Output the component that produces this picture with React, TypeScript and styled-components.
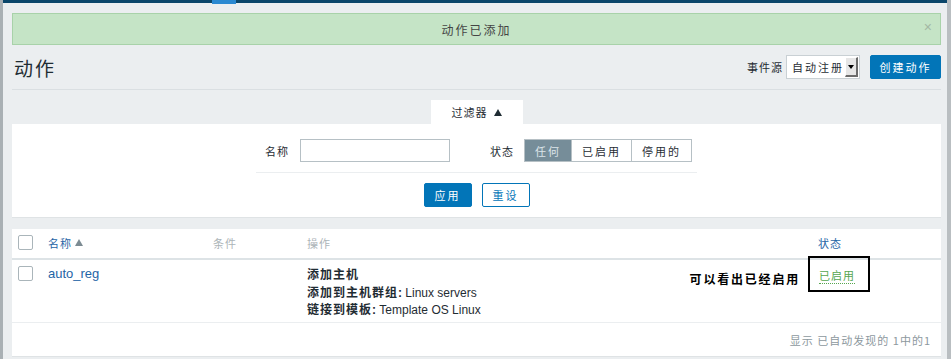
import React from 'react'
import styled, { createGlobalStyle } from 'styled-components'

const GlobalStyle = createGlobalStyle`
  html, body { margin: 0; padding: 0; }
  body {
    background: #ebeef0;
    font-family: "Liberation Sans", "Noto Sans CJK SC", sans-serif;
    font-size: 12px;
    color: #1f2c33;
  }
`

const cjk = `"Noto Sans CJK SC", "Liberation Sans", sans-serif`

const Frame = styled.div`
  width: 951px;
  height: 359px;
  box-sizing: border-box;
  border-left: 3px solid #a9b0b4;
  border-right: 4px solid #b9bec1;
  overflow: hidden;
  position: relative;
`

const TopBar = styled.div`
  height: 3px;
  background: #0a466a;
  display: flex;
  margin-left: -3px;
`

const TopTab = styled.div`
  margin-left: 212px;
  width: 24px;
  height: 4px;
  background: #2a89d1;
`

const Content = styled.div`
  padding: 0 6px 0 9px;
`

const Message = styled.div`
  margin-top: 10px;
  height: 32px;
  box-sizing: border-box;
  border: 1px solid #a8d2a9;
  background: #c5e4c6;
  display: flex;
  align-items: center;
  justify-content: center;
  position: relative;
  font-family: ${cjk};
  font-size: 12px;
  letter-spacing: 2px;
  color: #444;
`

const Close = styled.span`
  position: absolute;
  right: 8px;
  top: 5px;
  font-family: "Liberation Sans", sans-serif;
  font-size: 14px;
  color: #a3b7a4;
  letter-spacing: 0;
`

const Header = styled.div`
  height: 44px;
  border-bottom: 1px solid #dadfe2;
  display: flex;
  align-items: center;
  justify-content: space-between;
`

const Title = styled.h1`
  margin: 0 0 0 2px;
  font-family: ${cjk};
  font-weight: 400;
  font-size: 19px;
  letter-spacing: 2px;
  color: #1f2c33;
`

const Controls = styled.div`
  display: flex;
  align-items: center;
`

const Label = styled.span<{ $gap?: number }>`
  flex-shrink: 0;
  white-space: nowrap;
  margin-left: ${p => p.$gap ?? 0}px;
  font-family: ${cjk};
  font-size: 11px;
  letter-spacing: 1px;
  color: #1f2c33;
`

const Select = styled.div`
  margin-left: 3px;
  width: 74px;
  height: 24px;
  box-sizing: border-box;
  background: #fff;
  border: 1px solid #c9d0d4;
  display: flex;
  align-items: center;
  justify-content: space-between;
  padding-left: 5px;
  font-family: ${cjk};
  font-size: 11px;
  letter-spacing: 2px;
`

const SelectArrow = styled.div`
  width: 13px;
  height: 20px;
  margin-right: 1px;
  box-sizing: border-box;
  background: #e6e6e6;
  border-right: 2px solid #6b6b6b;
  border-bottom: 2px solid #6b6b6b;
  border-left: 1px solid #fff;
  border-top: 1px solid #fff;
  display: flex;
  align-items: center;
  justify-content: center;
  &::after {
    content: '';
    border-left: 3px solid transparent;
    border-right: 3px solid transparent;
    border-top: 4px solid #000;
  }
`

const Button = styled.button<{ $outline?: boolean }>`
  height: 24px;
  width: 48px;
  padding: 0;
  box-sizing: border-box;
  border: 1px solid #0275b8;
  border-radius: 2px;
  background: ${p => (p.$outline ? '#fff' : '#0275b8')};
  color: ${p => (p.$outline ? '#0275b8' : '#fff')};
  font-family: ${cjk};
  font-size: 11px;
  letter-spacing: 2px;
  cursor: pointer;
`

const CreateButton = styled(Button)`
  margin-left: 10px;
  width: 71px;
`

const TabRow = styled.div`
  margin-top: 10px;
  display: flex;
  justify-content: center;
`

const FilterTab = styled.div`
  width: 92px;
  height: 24px;
  background: #fff;
  display: flex;
  align-items: center;
  justify-content: center;
  font-family: ${cjk};
  font-size: 11px;
  letter-spacing: 1px;
  gap: 4px;
  &::after {
    content: '';
    border-left: 4px solid transparent;
    border-right: 4px solid transparent;
    border-bottom: 7px solid #1f2c33;
    margin-left: 2px;
  }
`

const Panel = styled.div`
  background: #fff;
  border-bottom: 1px solid #dfe3e5;
`

const FilterPanel = styled(Panel)`
  height: 94px;
  box-sizing: border-box;
  padding-top: 15px;
  display: flex;
  flex-direction: column;
  align-items: center;
`

const FilterRow = styled.div`
  width: 441px;
  box-sizing: border-box;
  padding: 0 8px 10px 9px;
  border-bottom: 1px solid #ebeef0;
  display: flex;
  align-items: center;
`

const Input = styled.div`
  margin-left: 11px;
  width: 150px;
  height: 23px;
  flex-shrink: 0;
  box-sizing: border-box;
  border: 1px solid #b6c0c5;
`

const Segments = styled.div`
  margin-left: 10px;
  display: flex;
  border: 1px solid #b6c0c5;
  height: 23px;
  box-sizing: border-box;
`

const Segment = styled.div<{ $active?: boolean; $w: number }>`
  width: ${p => p.$w}px;
  display: flex;
  align-items: center;
  justify-content: center;
  white-space: nowrap;
  font-family: ${cjk};
  font-size: 11px;
  letter-spacing: 2px;
  background: ${p => (p.$active ? '#768d99' : '#fff')};
  color: ${p => (p.$active ? '#dde5ea' : '#1f2c33')};
  & + & { border-left: 1px solid #b6c0c5; }
`

const ButtonRow = styled.div`
  margin-top: 10px;
  display: flex;
  gap: 10px;
`

const TablePanel = styled(Panel)`
  margin-top: 11px;
  height: 127px;
`

const Grid = styled.div<{ $head?: boolean }>`
  display: grid;
  grid-template-columns: 36px 165px 94px 511px 1fr;
  border-bottom: ${p => (p.$head ? '2px solid #dde3e6' : '1px solid #ebeef0')};
  height: ${p => (p.$head ? '23px' : '56px')};
  padding-top: 6px;
`

const CheckCell = styled.div`
  padding-left: 6px;
`

const Checkbox = styled.div`
  width: 15px;
  height: 15px;
  box-sizing: border-box;
  border: 1px solid #aab5ba;
  border-radius: 2px;
  background: #fff;
`

const HeadCell = styled.div<{ $link?: boolean }>`
  font-family: ${cjk};
  font-size: 11px;
  letter-spacing: 1px;
  color: ${p => (p.$link ? '#1f65a6' : '#acb4b8')};
  display: flex;
  align-items: flex-start;
  gap: 3px;
`

const SortUp = styled.span`
  margin-top: 4px;
  border-left: 4px solid transparent;
  border-right: 4px solid transparent;
  border-bottom: 7px solid #7c8b93;
`

const NameLink = styled.a`
  font-size: 13px;
  color: #1f65a6;
  text-decoration: none;
`

const Ops = styled.div`
  margin-top: -1px;
  font-size: 12px;
  color: #1f2c33;
`

const OpLine = styled.div`
  height: 17.5px;
  line-height: 17px;
  white-space: nowrap;
`

const OpKey = styled.b`
  font-family: ${cjk};
  letter-spacing: 1px;
`

const StatusCell = styled.div`
  position: relative;
`

const StatusBox = styled.div`
  position: absolute;
  left: -10px;
  top: -10px;
  width: 62px;
  height: 36px;
  box-sizing: border-box;
  border: 2px solid #000;
`

const Status = styled.span`
  position: relative;
  top: 1px;
  left: 1px;
  font-family: ${cjk};
  font-size: 11px;
  letter-spacing: 1px;
  color: #56a64f;
  border-bottom: 1px dotted #56a64f;
`

const Note = styled.div`
  position: absolute;
  right: 141px;
  top: 4px;
  font-family: ${cjk};
  font-weight: 700;
  font-size: 12px;
  letter-spacing: 1.8px;
  color: #000;
  white-space: nowrap;
`

const Footer = styled.div`
  display: flex;
  justify-content: flex-end;
  align-items: center;
  height: 33px;
  padding-right: 10px;
  font-family: ${cjk};
  font-size: 11px;
  letter-spacing: 1px;
  color: #8d989e;
`

export default function App() {
  return (
    <Frame>
      <GlobalStyle />
      <TopBar><TopTab /></TopBar>
      <Content>
        <Message>
          动作已添加
          <Close>×</Close>
        </Message>
        <Header>
          <Title>动作</Title>
          <Controls>
            <Label>事件源</Label>
            <Select>
              自动注册
              <SelectArrow />
            </Select>
            <CreateButton>创建动作</CreateButton>
          </Controls>
        </Header>
        <TabRow>
          <FilterTab>过滤器</FilterTab>
        </TabRow>
        <FilterPanel>
          <FilterRow>
            <Label>名称</Label>
            <Input />
            <Label $gap={40}>状态</Label>
            <Segments>
              <Segment $w={46} $active>任何</Segment>
              <Segment $w={59}>已启用</Segment>
              <Segment $w={59}>停用的</Segment>
            </Segments>
          </FilterRow>
          <ButtonRow>
            <Button>应用</Button>
            <Button $outline>重设</Button>
          </ButtonRow>
        </FilterPanel>
        <TablePanel>
          <Grid $head>
            <CheckCell><Checkbox /></CheckCell>
            <HeadCell $link>名称<SortUp /></HeadCell>
            <HeadCell>条件</HeadCell>
            <HeadCell>操作</HeadCell>
            <HeadCell $link>状态</HeadCell>
          </Grid>
          <Grid>
            <CheckCell><Checkbox /></CheckCell>
            <div><NameLink href="#">auto_reg</NameLink></div>
            <div />
            <Ops>
              <OpLine><OpKey>添加主机</OpKey></OpLine>
              <OpLine><OpKey>添加到主机群组</OpKey><b>:</b> Linux servers</OpLine>
              <OpLine><OpKey>链接到模板</OpKey><b>:</b> Template OS Linux</OpLine>
            </Ops>
            <StatusCell>
              <Note>可以看出已经启用</Note>
              <StatusBox />
              <Status>已启用</Status>
            </StatusCell>
          </Grid>
          <Footer>显示 已自动发现的 1中的1</Footer>
        </TablePanel>
      </Content>
    </Frame>
  )
}
